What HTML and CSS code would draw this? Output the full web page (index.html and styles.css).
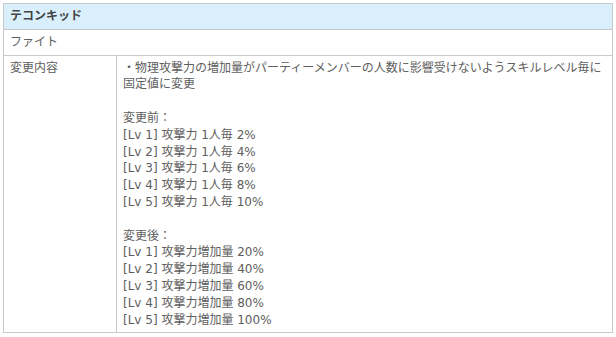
FILE: index.html
```html
<!DOCTYPE html>
<html lang="ja">
<head>
<meta charset="utf-8">
<title>テコンキッド</title>
<link rel="stylesheet" href="styles.css">
</head>
<body>
<table class="skill">
  <tr>
    <th colspan="2" class="skill_name">テコンキッド</th>
  </tr>
  <tr>
    <td colspan="2" class="skill_title">ファイト</td>
  </tr>
  <tr>
    <td class="label">変更内容</td>
    <td class="detail">・物理攻撃力の増加量がパーティーメンバーの人数に影響受けないようスキルレベル毎に固定値に変更<br>
<br>
変更前：<br>
[Lv 1] 攻撃力 1人毎 2%<br>
[Lv 2] 攻撃力 1人毎 4%<br>
[Lv 3] 攻撃力 1人毎 6%<br>
[Lv 4] 攻撃力 1人毎 8%<br>
[Lv 5] 攻撃力 1人毎 10%<br>
<br>
変更後：<br>
[Lv 1] 攻撃力増加量 20%<br>
[Lv 2] 攻撃力増加量 40%<br>
[Lv 3] 攻撃力増加量 60%<br>
[Lv 4] 攻撃力増加量 80%<br>
[Lv 5] 攻撃力増加量 100%</td>
  </tr>
</table>
</body>
</html>
```

FILE: styles.css
```css
body { margin: 3px; background: #fff; font-family: "DejaVu Sans", "Noto Sans CJK JP", sans-serif;
  font-size: 12px; line-height: 1.4; color: #5e5e5e; }
.skill { border-collapse: collapse; width: 610px; }
.skill th, .skill td { border: 1px solid #c8c8c8; padding: 4px 6px; text-align: left;
  vertical-align: top; font-weight: normal; }
.skill_name { background-color: #d9f0fc; font-weight: bold !important; color: #444; padding: 3px 6px; }
.label { width: 100px; }
.detail { padding-left: 5px; }
```
